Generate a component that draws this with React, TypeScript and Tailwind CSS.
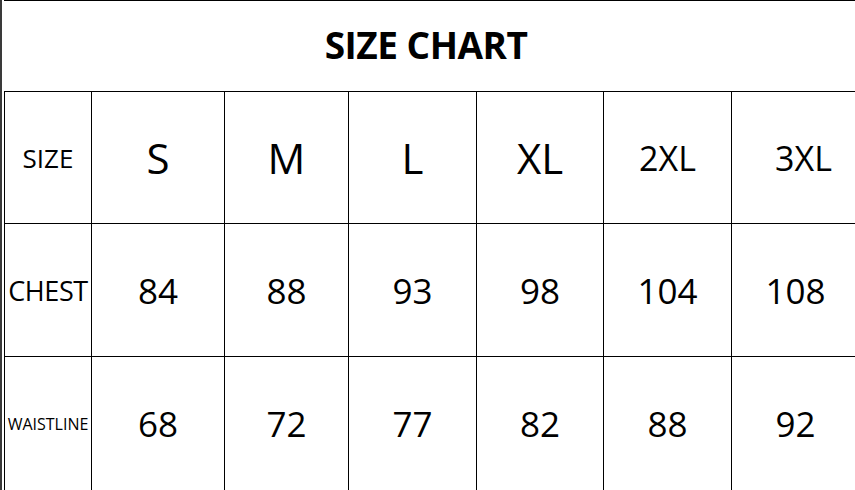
import React from "react";

const sizes = ["S", "M", "L", "XL", "2XL", "3XL"];
const chest = ["84", "88", "93", "98", "104", "108"];
const waist = ["68", "72", "77", "82", "88", "92"];

export default function App() {
  const cell = "border-l border-t border-black flex items-center justify-center text-black";
  return (
    <div
      className="w-[855px] h-[490px] overflow-hidden bg-white flex"
      style={{ fontFamily: '"Open Sans", "Noto Sans", sans-serif' }}
    >
      <div className="w-[2px] h-full bg-[#3a3a3a] shrink-0" />
      <div className="w-[2px] shrink-0" />
      <div className="flex flex-col shrink-0 w-[860px]">
        <div className="h-[92px] border-t border-black flex items-center justify-center">
          <span className="text-[37px] font-bold leading-none text-black -translate-x-[8px] -translate-y-[2px] tracking-[-0.5px]">SIZE CHART</span>
        </div>
        <div className="grid grid-cols-[87px_133px_124px_128px_127px_128px_128px] grid-rows-[132px_133px_134px]">
          <div className={cell}>
            <span className="text-[26px] leading-none">SIZE</span>
          </div>
          {sizes.map((s, i) => (
            <div key={s} className={cell}>
              <span
                className={
                  i >= 4
                    ? i === 5
                      ? "text-[34px] leading-none pl-[16px]"
                      : "text-[34px] leading-none"
                    : "text-[42px] leading-none"
                }
              >
                {s}
              </span>
            </div>
          ))}
          <div className={cell}>
            <span className="text-[27px] leading-none tracking-[-0.4px]">CHEST</span>
          </div>
          {chest.map((s, i) => (
            <div key={i} className={cell}>
              <span className="text-[35px] leading-none">{s}</span>
            </div>
          ))}
          <div className={cell}>
            <span className="text-[16px] leading-none tracking-[0px]">WAISTLINE</span>
          </div>
          {waist.map((s, i) => (
            <div key={i} className={cell}>
              <span className="text-[35px] leading-none">{s}</span>
            </div>
          ))}
        </div>
      </div>
    </div>
  );
}
